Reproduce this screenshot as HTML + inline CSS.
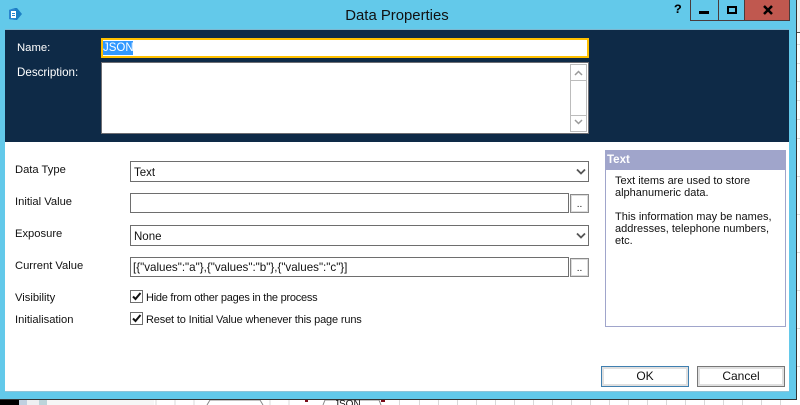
<!DOCTYPE html>
<html><head><meta charset="utf-8"><title>Data Properties</title>
<style>
html,body{margin:0;padding:0;background:#fff}
body{width:800px;height:405px;position:relative;overflow:hidden;font-family:"Liberation Sans",sans-serif;font-size:11.2px;color:#111}
.a{position:absolute;box-sizing:border-box}
.t{position:absolute;white-space:nowrap;line-height:14px}
.b{position:absolute;box-sizing:border-box;background:#fff;border:1px solid #6e6e6e}
.dots{position:absolute;box-sizing:border-box;width:19px;height:19px;left:570px;background:#fff;border:2px solid #dcdcdc;outline:1px solid #8a8a8a;outline-offset:-1px;font-size:10px;line-height:18px;text-align:center}
.cb{position:absolute;box-sizing:border-box;left:130px;width:13px;height:13px;background:#fff;border:1px solid #6e6e6e}
.c{font-size:11px}
</style></head><body>
<!-- backdrop -->
<div class="a" style="left:797px;top:0;width:3px;height:405px;background:#fff"></div>
<div class="a" style="left:797px;top:0;width:3px;height:32px;background:#f0f0f0"></div>
<div class="a" style="left:797px;top:32px;width:3px;height:1px;background:#555"></div>
<div class="a" style="left:797px;top:44px;width:3px;height:1px;background:#ddd"></div>
<div class="a" style="left:797px;top:63px;width:3px;height:1px;background:#ddd"></div>
<div class="a" style="left:797px;top:81px;width:3px;height:1px;background:#ddd"></div>
<div class="a" style="left:797px;top:100px;width:3px;height:1px;background:#ddd"></div>
<div class="a" style="left:797px;top:119px;width:3px;height:1px;background:#ddd"></div>
<div class="a" style="left:797px;top:138px;width:3px;height:1px;background:#ddd"></div>
<div class="a" style="left:797px;top:176px;width:3px;height:1px;background:#ddd"></div>
<div class="a" style="left:797px;top:214px;width:3px;height:1px;background:#ddd"></div>
<div class="a" style="left:797px;top:252px;width:3px;height:1px;background:#ddd"></div>
<div class="a" style="left:797px;top:290px;width:3px;height:1px;background:#ddd"></div>
<div class="a" style="left:797px;top:328px;width:3px;height:1px;background:#ddd"></div>
<div class="a" style="left:797px;top:366px;width:3px;height:1px;background:#ddd"></div>
<svg class="a" style="left:0;top:399px" width="800" height="6">
<rect x="0" y="1" width="19" height="5" fill="#000"/><rect x="19" y="1" width="8" height="5" fill="#c0d0e0"/><rect x="27" y="1" width="12" height="5" fill="#eef0f2"/><rect x="39" y="1" width="8" height="5" fill="#bcd4da"/><rect x="47" y="1" width="107" height="5" fill="#f6f6f6"/>
<g stroke="#d8d8d8" fill="none"><path d="M156 1v5M175 1v5M194 1v5M270 1v5M289 1v5M419.500 1v5M438.500 1v5M457.500 1v5M476.500 1v5M495.500 1v5M514.500 1v5M533.500 1v5M552.500 1v5M571.500 1v5M590.500 1v5M609.500 1v5M628.500 1v5M647.500 1v5M666.500 1v5M685.500 1v5M704.500 1v5M723.500 1v5M742.500 1v5M761.500 1v5M780.500 1v5M399.500 1v5"/></g>
<path d="M207 6l3-5h50l3 5M323 6l2-5h54l2 5" stroke="#888" fill="none"/>
<rect x="305" y="1" width="3" height="2" fill="#7a0c1a"/><rect x="381" y="1" width="4" height="2" fill="#7a0c1a"/>
</svg>
<div class="t" style="left:334px;top:399px;font-size:10px;height:6px;overflow:hidden;line-height:11px">JSON</div>
<!-- window -->
<div class="a" style="left:0;top:0;width:797px;height:400px;background:#63c9ea;border-right:1px solid #333;border-bottom:1px solid #333"></div>
<svg class="a" style="left:8px;top:7px" width="15" height="14"><path d="M1 3l6-2h2l5 6-5 6H7l-6-1z" fill="#1c7fc4"/><path d="M1 3l6-2 1 12-7-1z" fill="#2b86cf"/><rect x="3" y="4" width="5" height="7" fill="#fff"/><rect x="4" y="6" width="3" height="1" fill="#2b86cf"/><rect x="4" y="8" width="3" height="1" fill="#2b86cf"/></svg>
<div class="t" style="left:297px;top:6px;width:200px;text-align:center;font-size:14.900px;line-height:20px;color:#111">Data Properties</div>
<!-- controls -->
<div class="t" style="left:674px;top:3px;font-weight:bold;font-size:13px;color:#000;font-family:'Liberation Mono',monospace">?</div>
<div class="a" style="left:690px;top:0;width:100px;height:21px;border:1px solid #4a3b3b;border-top:0;background:#63c9ea"></div>
<div class="a" style="left:718px;top:0;width:1px;height:20px;background:#4a3b3b"></div>
<div class="a" style="left:744px;top:0;width:46px;height:21px;background:#c0584f;border:1px solid #4a3b3b;border-top:0"></div>
<div class="a" style="left:699px;top:11px;width:10px;height:3px;background:#000"></div>
<div class="a" style="left:727px;top:6px;width:10px;height:8px;border:2px solid #000"></div>
<svg class="a" style="left:762px;top:5px" width="12" height="10"><path d="M2 1l8 8M10 1L2 9" stroke="#000" stroke-width="2.500" fill="none"/></svg>
<!-- client -->
<div class="a" style="left:5px;top:29px;width:784px;height:363px;background:#fff;border-bottom:1px solid #8fc4d8"></div>
<div class="a" style="left:5px;top:29px;width:784px;height:113px;background:#0e2a47;border-top:1px solid #7cb6cf"></div>
<div class="t" style="left:17px;top:41px;color:#fff;font-size:11.3px">Name:</div>
<div class="t" style="left:17px;top:66px;color:#fff;font-size:11.6px">Description:</div>
<div class="a" style="left:101px;top:38px;width:488px;height:20px;background:#fff;border:2px solid #ffc000"></div>
<div class="t" style="left:103px;top:41px;height:14px;width:30px;line-height:14px;background:#3399ff;color:#fff;font-size:11.5px">JSON</div>
<div class="a" style="left:101px;top:62px;width:488px;height:72px;background:#fff;border:1px solid #6e6e73"></div>
<div class="a" style="left:570px;top:64px;width:17px;height:68px;background:#fff;border:1px solid #bcbcbc"></div>
<div class="a" style="left:571px;top:80px;width:15px;height:1px;background:#bcbcbc"></div>
<div class="a" style="left:571px;top:115px;width:15px;height:1px;background:#bcbcbc"></div>
<svg class="a" style="left:570px;top:64px" width="17" height="68"><path d="M5 11l3.500-3.500L12 11M5 56l3.500 3.500L12 56" stroke="#9a9a9a" stroke-width="1.500" fill="none"/></svg>
<!-- labels -->
<div class="t" style="left:15px;top:163px">Data Type</div>
<div class="t" style="left:15px;top:195px">Initial Value</div>
<div class="t" style="left:15px;top:227px">Exposure</div>
<div class="t" style="left:15px;top:259px">Current Value</div>
<div class="t" style="left:15px;top:291px">Visibility</div>
<div class="t" style="left:15px;top:313px">Initialisation</div>
<!-- fields -->
<div class="b" style="left:130px;top:161px;width:459px;height:21px"></div>
<div class="t" style="left:134px;top:166px;font-size:11.5px">Text</div>
<div class="b" style="left:130px;top:193px;width:439px;height:20px"></div>
<div class="dots" style="top:194px">..</div>
<div class="b" style="left:130px;top:225px;width:459px;height:21px"></div>
<div class="t" style="left:134px;top:230px;font-size:11.5px">None</div>
<div class="b" style="left:130px;top:257px;width:439px;height:20px"></div>
<div class="t" style="left:133px;top:261px;font-size:11.600px">[{"values":"a"},{"values":"b"},{"values":"c"}]</div>
<div class="dots" style="top:258px">..</div>
<svg class="a" style="left:576px;top:168px" width="10" height="8"><path d="M1 1.500l4 4 4-4" stroke="#555" stroke-width="1.800" fill="none"/></svg>
<svg class="a" style="left:576px;top:232px" width="10" height="8"><path d="M1 1.500l4 4 4-4" stroke="#555" stroke-width="1.800" fill="none"/></svg>
<!-- checks -->
<div class="cb" style="top:290px"></div>
<svg class="a" style="left:130px;top:290px" width="13" height="13"><path d="M3 6.500l2.500 2.500L10.500 3" stroke="#111" stroke-width="2" fill="none"/></svg>
<div class="t c" style="left:146px;top:291px;letter-spacing:-.25px">Hide from other pages in the process</div>
<div class="cb" style="top:312px"></div>
<svg class="a" style="left:130px;top:312px" width="13" height="13"><path d="M3 6.500l2.500 2.500L10.500 3" stroke="#111" stroke-width="2" fill="none"/></svg>
<div class="t c" style="left:146px;top:313px;letter-spacing:-.16px">Reset to Initial Value whenever this page runs</div>
<!-- info -->
<div class="a" style="left:605px;top:150px;width:181px;height:177px;background:#fff;border:1px solid #a0a5cb"></div>
<div class="a" style="left:605px;top:150px;width:181px;height:20px;background:#a0a5cb"></div>
<div class="t" style="left:607px;top:153px;color:#fff;font-weight:bold;font-size:11.5px">Text</div>
<div class="t" style="left:615px;top:175px;line-height:12px;font-size:11px">Text items are used to store<br>alphanumeric data.<br><br>This information may be names,<br>addresses, telephone numbers,<br>etc.</div>
<!-- buttons -->
<div class="a" style="left:601px;top:366px;width:88px;height:21px;background:#fff;border:1px solid #3f7fb0;box-shadow:inset 0 0 0 2px #e0e0e0;text-align:center;line-height:18px;font-size:12px">OK</div>
<div class="a" style="left:697px;top:366px;width:88px;height:21px;background:#fff;border:1px solid #777;box-shadow:inset 0 0 0 2px #e0e0e0;text-align:center;line-height:18px;font-size:12px">Cancel</div>
</body></html>
